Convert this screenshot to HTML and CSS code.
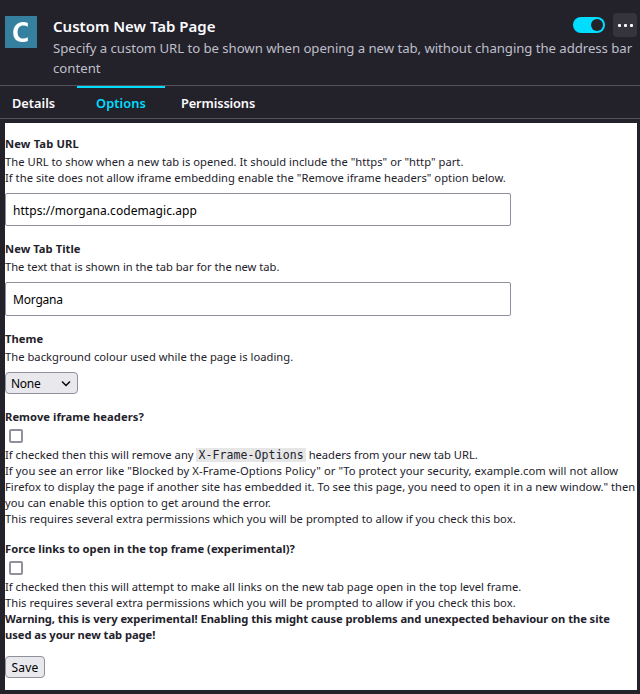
FILE: index.html
```html
<!DOCTYPE html>
<html lang="en">
<head>
<meta charset="utf-8">
<title>Custom New Tab Page</title>
<link rel="stylesheet" href="styles.css">
</head>
<body>
<header class="addon">
  <svg class="addon-icon" width="32" height="32" viewBox="0 0 32 32"><rect width="32" height="32" fill="#35809f"/><path d="M22.800 6.900v3.900c-1.300-.8-2.800-1.200-4.300-1.200-3.800 0-5.900 2.500-5.900 6.600 0 4 2.100 6.300 5.500 6.300 1.700 0 3.300-.4 4.700-1.200v3.700c-1.600.8-3.500 1.100-5.800 1.100-5.600 0-8.800-3.600-8.800-9.500 0-6.300 4.100-10.500 9.900-10.500 1.900 0 3.500.3 4.700.8z" fill="#fff"/></svg>
  <div class="addon-info">
    <div class="addon-top">
      <h1 class="addon-name">Custom New Tab Page</h1>
      <span class="toggle"><span class="knob"></span></span>
      <button class="more" aria-label="More options"><i></i><i></i><i></i></button>
    </div>
    <p class="addon-desc"><span class="first">Specify a custom URL to be shown when opening a new tab, without changing the address bar</span><br>content</p>
  </div>
</header>
<nav class="tabs">
  <span class="tab details">Details</span>
  <span class="tab options">Options</span>
  <span class="tab permissions">Permissions</span>
</nav>
<main class="panel">
  <section class="field">
    <h2 class="narrow">New Tab URL</h2>
    <p>The URL to show when a new tab is opened. It should include the "https" or "http" part.<br>If the site does not allow iframe embedding enable the "Remove iframe headers" option below.</p>
    <input class="url" type="text" value="https://morgana.codemagic.app">
  </section>
  <section class="field">
    <h2>New Tab Title</h2>
    <p class="tight">The text that is shown in the tab bar for the new tab.</p>
    <input class="name" type="text" value="Morgana">
  </section>
  <section class="field">
    <h2>Theme</h2>
    <p>The background colour used while the page is loading.</p>
    <div class="select">None<svg width="10" height="8" viewBox="0 0 10 8"><path d="M1.500 2l3.500 3.500L8.500 2" fill="none" stroke="#15141a" stroke-width="1.700" stroke-linecap="round" stroke-linejoin="round"/></svg></div>
  </section>
  <section class="field checks">
    <h2>Remove iframe headers?</h2>
    <span class="checkbox"></span>
    <p>If checked then this will remove any <code>X-Frame-Options</code> <span class="snug">headers from your new tab URL.</span><br><span class="wide">If you see an error like "Blocked by X-Frame-Options Policy" or "To protect your security, example.com will not allow</span><br><span class="fit">Firefox to display the page if another site has embedded it. To see this page, you need to open it in a new window." then</span><br>you can enable this option to get around the error.<br>This requires several extra permissions which you will be prompted to allow if you check this box.</p>
  </section>
  <section class="field">
    <h2 class="long">Force links to open in the top frame (experimental)?</h2>
    <span class="checkbox"></span>
    <p>If checked then this will attempt to make all links on the new tab page open in the top level frame.<br>This requires several extra permissions which you will be prompted to allow if you check this box.<br><strong>Warning, this is very experimental! Enabling this might cause problems and unexpected behaviour on the site<br>used as your new tab page!</strong></p>
    <button class="save">Save</button>
  </section>
</main>
</body>
</html>
```
FILE: styles.css
```css
* { box-sizing: border-box; }
body {
  margin: 0;
  height: 694px;
  background: #23222b;
  font-family: "Noto Sans", sans-serif;
  color: #23222b;
  overflow: hidden;
}
h1, h2, p { margin: 0; }

.addon {
  height: 85px;
  padding: 13px 3px 0 5px;
  display: flex;
  gap: 16px;
}
.addon-icon { margin-top: 3px; flex: none; }
.addon-info { flex: 1; }
.addon-top { display: flex; align-items: center; height: 24px; }
.addon-name {
  flex: 1;
  padding-top: 2px;
  font-size: 15px;
  line-height: 24px;
  font-weight: 600;
  color: #fbfbfe;
}
.toggle {
  width: 32px;
  height: 16px;
  padding: 2px;
  border-radius: 8px;
  background: #00ddff;
  display: flex;
  justify-content: flex-end;
}
.knob { width: 12px; height: 12px; border-radius: 50%; background: #23222b; }
.more {
  width: 24px;
  height: 24px;
  margin-left: 8px;
  padding: 0;
  border: 0;
  border-radius: 4px;
  background: #35343d;
  display: flex;
  align-items: center;
  justify-content: center;
  gap: 3px;
}
.more i { width: 3px; height: 3px; border-radius: 1px; background: #fbfbfe; }
.addon-desc {
  padding-top: 1px;
  font-size: 13.2px;
  line-height: 20px;
  color: #bfbfc9;
  white-space: nowrap;
}
.first { letter-spacing: -0.050px; }

.tabs {
  height: 34px;
  border-top: 1px solid #52525e;
  border-bottom: 1px solid #52525e;
  display: flex;
  font-size: 12.800px;
  font-weight: 600;
  line-height: 34px;
  color: #fbfbfe;
}
.tab { flex: none; }
.details { width: 77px; padding-left: 12px; }
.options {
  width: 88px;
  height: 32px;
  line-height: 30px;
  padding-left: 19px;
  border-top: 2px solid #00ddff;
  color: #00ddff;
  letter-spacing: 0.080px;
}
.permissions { padding-left: 16px; letter-spacing: -0.120px; }

.panel {
  width: 632px;
  height: 567px;
  margin: 4px 0 0 5px;
  padding-top: 13px;
  background: #fff;
  font-size: 11.200px;
  line-height: 16px;
  white-space: nowrap;
}
.field { display: flex; flex-direction: column; align-items: flex-start; margin-bottom: 15px; }
.field p { letter-spacing: 0.025px; }
.checks { margin-bottom: 14px; }
h2 { font-size: 11.200px; line-height: 16px; font-weight: 700; margin-bottom: 2px; letter-spacing: 0.050px; }
.narrow { letter-spacing: 0.150px; }
.long { letter-spacing: 0.010px; }
.field .tight { letter-spacing: -0.010px; }
.snug { letter-spacing: -0.020px; }
.wide { letter-spacing: 0.073px; }
.fit { letter-spacing: 0.015px; }
strong { letter-spacing: -0.055px; }

input {
  width: 506px;
  margin-top: 7px;
  padding: 1px 7px 0;
  border: 1px solid #8f8f9d;
  border-radius: 2px;
  background: #fff;
  font: 12px "Noto Sans", sans-serif;
  color: #000;
}
.url { height: 33px; letter-spacing: 0.060px; }
.name { height: 34px; letter-spacing: -0.200px; }

.select, .save {
  height: 22px;
  border: 1px solid #8f8f9d;
  border-radius: 4px;
  background: #e9e9ed;
  font: 12px/20px "Noto Sans", sans-serif;
  color: #000;
}
.select {
  width: 73px;
  margin-top: 7px;
  padding: 1px 6px 0 5px;
  display: flex;
  justify-content: space-between;
  letter-spacing: -0.300px;
}
.select svg { margin-top: 6px; }
.save { width: 40px; margin-top: 13px; padding: 1px 0 0; letter-spacing: 0.150px; }

.checkbox {
  width: 14px;
  height: 14px;
  margin: 2px 0 4px 4px;
  border: 2px solid #8f8f9d;
  border-radius: 2px;
  background: #fff;
}
code {
  padding: 0 2px;
  background: #e6e6e6;
  font: 11.500px/14px "DejaVu Sans Mono", monospace;
  letter-spacing: 0.090px;
}
```
